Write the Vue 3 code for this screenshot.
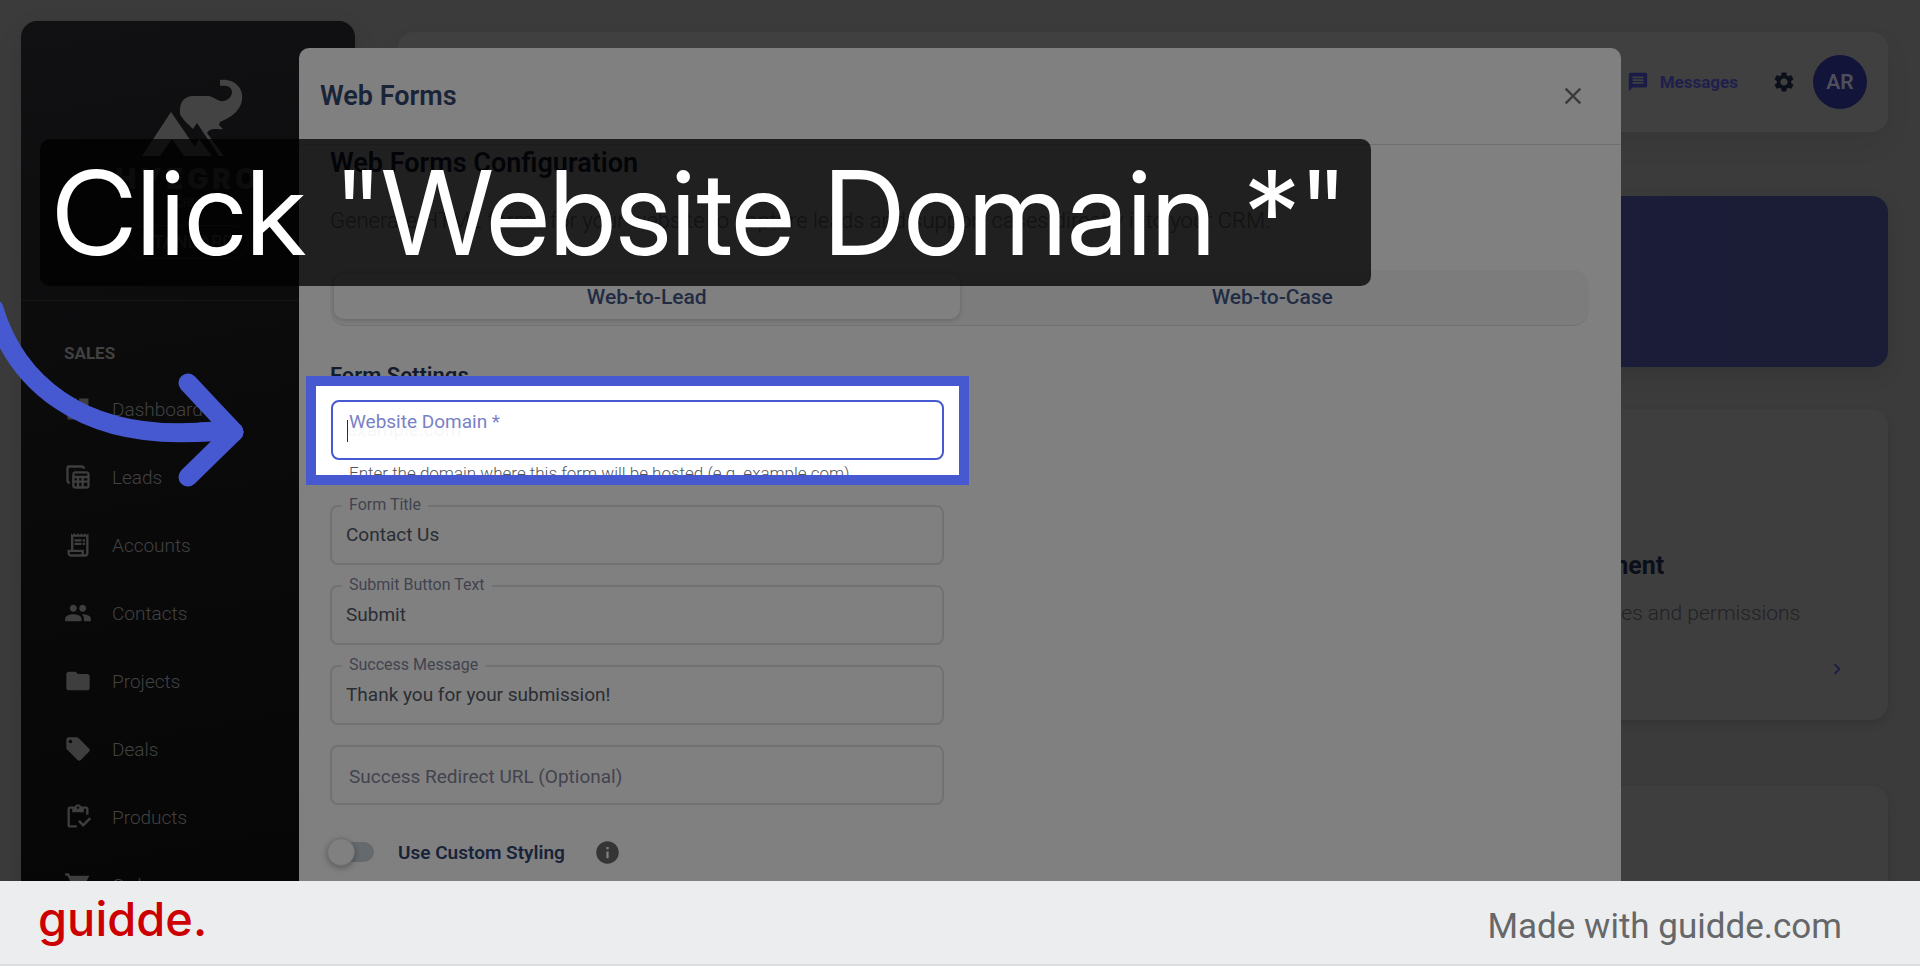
<script setup>
import { ref } from 'vue';

const navItems = [
  { label: 'Dashboard', icon: 'M3 13h8V3H3v10zm0 8h8v-6H3v6zm10 0h8V11h-8v10zm0-18v6h8V3h-8z' },
  { label: 'Leads', icon: 'M9 7h10a3 3 0 0 1 3 3v9a3 3 0 0 1-3 3H10a3 3 0 0 1-3-3V10a3 3 0 0 1 2-3zm0 2v2h11V9zm0 4v2h2v-2zm4 0v2h2v-2zm4 0v2h3v-2zm-8 4v3h2v-3zm4 0v3h2v-3zm4 0v3h3v-3zM4 2h11a3 3 0 0 1 3 3h-2a1 1 0 0 0-1-1H5a1 1 0 0 0-1 1v10a1 1 0 0 0 1 1v2a3 3 0 0 1-3-3V4a2 2 0 0 1 2-2z' },
  { label: 'Accounts', icon: 'M19.5 3.5 18 2l-1.500 1.500L15 2l-1.500 1.500L12 2l-1.500 1.500L9 2 7.500 3.500 6 2v14H3v3c0 1.660 1.340 3 3 3h12c1.660 0 3-1.340 3-3V2l-1.500 1.500zM15 20H6c-.55 0-1-.45-1-1v-1h10v2zm4-1c0 .55-.45 1-1 1s-1-.45-1-1v-3H8V5h11v14zM9 7h6v2H9zm7 0h2v2h-2zm-7 3h6v2H9zm7 0h2v2h-2z' },
  { label: 'Contacts', icon: 'M16 11c1.660 0 2.990-1.340 2.990-3S17.660 5 16 5s-3 1.340-3 3 1.340 3 3 3zm-8 0c1.660 0 2.990-1.340 2.990-3S9.660 5 8 5 5 6.340 5 8s1.340 3 3 3zm0 2c-2.330 0-7 1.170-7 3.500V19h14v-2.500C15 14.170 10.330 13 8 13zm8 0c-.29 0-.62.02-.97.05 1.160.84 1.970 1.970 1.970 3.450V19h6v-2.500c0-2.330-4.670-3.500-7-3.500z' },
  { label: 'Projects', icon: 'M10 4H4c-1.100 0-1.990.9-1.990 2L2 18c0 1.100.9 2 2 2h16c1.100 0 2-.9 2-2V8c0-1.100-.9-2-2-2h-8l-2-2z' },
  { label: 'Deals', icon: 'M21.410 11.580l-9-9C12.050 2.220 11.550 2 11 2H4c-1.100 0-2 .9-2 2v7c0 .55.22 1.050.59 1.420l9 9c.36.36.86.58 1.410.58s1.050-.22 1.410-.59l7-7c.37-.36.59-.86.59-1.410s-.23-1.060-.59-1.420zM5.500 7C4.670 7 4 6.330 4 5.500S4.670 4 5.500 4 7 4.670 7 5.500 6.330 7 5.500 7z' },
  { label: 'Products', icon: 'M5 5h2v3h10V5h2v5h2V5c0-1.100-.9-2-2-2h-4.180C14.400 1.840 13.300 1 12 1s-2.400.84-2.820 2H5c-1.100 0-2 .9-2 2v14c0 1.100.9 2 2 2h6v-2H5V5zm7-2c.55 0 1 .45 1 1s-.45 1-1 1-1-.45-1-1 .45-1 1-1zm9.750 9.250-5.260 5.250-2.990-2.990L12 16.010 16.490 20.500 23.250 13.750z' },
  { label: 'Orders', icon: 'M7 18c-1.100 0-1.990.9-1.990 2S5.900 22 7 22s2-.9 2-2-.9-2-2-2zM1 2v2h2l3.600 7.590-1.350 2.450C4.520 15.370 5.480 17 7 17h12v-2H7.420l1.130-2h7.450c.75 0 1.410-.41 1.750-1.030L21.700 4H5.210l-.94-2H1zm16 16c-1.100 0-1.990.9-1.990 2s.89 2 1.990 2 2-.9 2-2-.9-2-2-2z' }
];

const domain = ref('');
const redirectUrl = ref('');
const customStyling = ref(false);
const activeTab = ref('Web-to-Lead');

const fields = ref([
  { id: 'formTitle', label: 'Form Title', value: 'Contact Us' },
  { id: 'submitText', label: 'Submit Button Text', value: 'Submit' },
  { id: 'successMessage', label: 'Success Message', value: 'Thank you for your submission!' }
]);
</script>

<template>
  <div class="page">
    <div class="stage">
      <aside class="sidebar">
        <div class="brand">
          <svg class="brand-mark" viewBox="0 0 82 78">
            <path d="M0 77 29 33 53 68 57 60 70 77H42L30 60 18 77z" />
            <path d="M38 35C37 24 41 18 50 17H67C72 18 77 23 81 22C93 20 94 4 78 7V1C92-1 102 9 100 21C98 32 90 38 78 43L77 46 81 50C75 51 69 48 65 54L82 77H77L55 44 51 50C45 44 40 40 38 35z" />
          </svg>
          <strong class="brand-name">HYEGRO</strong>
          <small class="brand-sub">CRM</small>
          <span class="plan">STANDARD</span>
        </div>
        <nav class="nav">
          <h2>SALES</h2>
          <a v-for="item in navItems" :key="item.label" href="#" class="nav-item">
            <svg viewBox="0 0 24 24"><path :d="item.icon" fill-rule="evenodd" /></svg>
            {{ item.label }}
          </a>
        </nav>
      </aside>

      <main class="content">
        <header class="topbar">
          <a href="#" class="messages">
            <svg viewBox="0 0 24 24"><path d="M20 2H4c-1.100 0-1.990.9-1.990 2L2 22l4-4h14c1.100 0 2-.9 2-2V4c0-1.100-.9-2-2-2zM6 9h12v2H6V9zm12 5H6v-2h12v2zm0-6H6V6h12v2z" /></svg>
            Messages
          </a>
          <button class="gear" aria-label="Settings">
            <svg viewBox="0 0 24 24"><path d="M19.140 12.940c.04-.3.06-.61.06-.94 0-.32-.02-.64-.07-.94l2.030-1.580c.18-.14.23-.41.12-.61l-1.920-3.320c-.12-.22-.37-.29-.59-.22l-2.390.96c-.5-.38-1.030-.7-1.620-.94l-.36-2.540c-.04-.24-.24-.41-.48-.41h-3.840c-.24 0-.43.17-.47.41l-.36 2.540c-.59.24-1.130.57-1.620.94l-2.390-.96c-.22-.08-.47 0-.59.22L2.740 8.870c-.12.21-.08.47.12.61l2.030 1.580c-.05.3-.09.63-.09.94s.02.64.07.94l-2.030 1.580c-.18.14-.23.41-.12.61l1.920 3.320c.12.22.37.29.59.22l2.390-.96c.5.38 1.030.7 1.620.94l.36 2.540c.05.24.24.41.48.41h3.840c.24 0 .44-.17.47-.41l.36-2.540c.59-.24 1.130-.56 1.620-.94l2.390.96c.22.08.47 0 .59-.22l1.920-3.320c.12-.22.07-.47-.12-.61l-2.010-1.580zM12 15.600c-1.980 0-3.600-1.620-3.600-3.600s1.620-3.600 3.600-3.600 3.600 1.620 3.600 3.600-1.620 3.600-3.600 3.600z" /></svg>
          </button>
          <button class="avatar">AR</button>
        </header>
        <section class="banner"></section>
        <section class="cards">
          <article class="card">
            <h3>User Management</h3>
            <p>Manage users, roles and permissions</p>
            <svg class="chevron" viewBox="0 0 24 24"><path d="M10 6 8.590 7.410 13.170 12l-4.580 4.590L10 18l6-6z" /></svg>
          </article>
          <article class="card"></article>
        </section>
      </main>

      <div class="modal-layer">
        <section class="modal">
          <header class="modal-header">
            <h1>Web Forms</h1>
            <button class="close-btn" aria-label="Close">
              <svg viewBox="0 0 24 24"><path d="M19 6.410 17.590 5 12 10.590 6.410 5 5 6.410 10.590 12 5 17.590 6.410 19 12 13.410 17.590 19 19 17.590 13.410 12z" /></svg>
            </button>
          </header>
          <div class="modal-body">
            <h2 class="config-title">Web Forms Configuration</h2>
            <p class="config-text">Generate HTML forms for your website to capture leads and support cases directly into your CRM.</p>

            <div class="tabs">
              <button
                v-for="tab in ['Web-to-Lead', 'Web-to-Case']"
                :key="tab"
                class="tab"
                :class="{ active: activeTab === tab }"
                @click="activeTab = tab"
              >{{ tab }}</button>
            </div>

            <h3 class="settings-title">Form Settings</h3>

            <!-- highlighted step target -->
            <div class="spotlight">
              <div class="domain-field">
                <input id="domain" v-model="domain" type="text" placeholder="example.com">
                <label for="domain">Website Domain *</label>
                <span class="caret"></span>
              </div>
              <p class="helper">Enter the domain where this form will be hosted (e.g. example.com)</p>
            </div>

            <div class="fields">
              <div v-for="field in fields" :key="field.id" class="field">
                <label :for="field.id">{{ field.label }}</label>
                <input :id="field.id" v-model="field.value" type="text">
              </div>
              <div class="field field-empty">
                <label for="redirectUrl">Success Redirect URL (Optional)</label>
                <input id="redirectUrl" v-model="redirectUrl" type="text">
              </div>
            </div>

            <div class="toggle-container">
              <input id="customStyling" v-model="customStyling" type="checkbox" class="toggle">
              <label for="customStyling">Use Custom Styling</label>
              <svg class="info" viewBox="0 0 24 24"><path d="M12 2C6.480 2 2 6.480 2 12s4.480 10 10 10 10-4.480 10-10S17.520 2 12 2zm1 15h-2v-6h2v6zm0-8h-2V7h2v2z" /></svg>
            </div>
          </div>
        </section>
      </div>

      <svg class="arrow" viewBox="0 0 250 200">
        <path d="M-6 19C14 85 75 155 215 141M188 93 234 142 188 187" />
        <path d="M200 142H234" />
      </svg>
      <div class="callout">Click "Website Domain *"</div>
    </div>

    <footer class="footer">
      <span class="guidde">guidde.</span>
      <a href="#" class="made-with">Made with guidde.com</a>
    </footer>
  </div>
</template>

<style>
body {
  margin: 0;
}
</style>

<style scoped>
* {
  box-sizing: border-box;
}

h1, h2, h3, p {
  margin: 0;
}

button {
  padding: 0;
  border: none;
  background: none;
  font-family: inherit;
  cursor: pointer;
}

a {
  text-decoration: none;
}

.page {
  display: flex;
  flex-direction: column;
  height: 100vh;
  font-family: Roboto, sans-serif;
}

.stage {
  display: flex;
  flex: 1;
  min-height: 0;
  position: relative;
  overflow: hidden;
  background: #3b3b3b;
}

/* sidebar */
.sidebar {
  flex: none;
  width: 334px;
  height: 1200px;
  margin: 21px 0 0 21px;
  border-radius: 16px;
  background: linear-gradient(170deg, #111113 0, #0a0a0b 440px, #060606 900px);
  box-shadow: 0 8px 24px rgba(0, 0, 0, 0.1);
}

.brand {
  display: flex;
  flex-direction: column;
  align-items: center;
  height: 280px;
  padding-top: 58px;
  border-bottom: 1px solid #171717;
}

.brand-mark {
  width: 82px;
  height: 78px;
  margin-right: 10px;
  overflow: visible;
  fill: #434343;
}

.brand-name {
  margin-top: 8px;
  font: 900 28px/28px Inter, sans-serif;
  letter-spacing: 4px;
  color: #303030;
}

.brand-sub {
  font-size: 12px;
  line-height: 20px;
  color: #303030;
}

.plan {
  margin-top: 12px;
  padding: 0 14px;
  border: 1px solid #222;
  border-radius: 16px;
  font-size: 18px;
  font-weight: 500;
  line-height: 32px;
  color: #303030;
}

.nav {
  padding: 42px 43px 0;
}

.nav h2 {
  margin-bottom: 12px;
  font-size: 17px;
  font-weight: 700;
  line-height: 20px;
  color: #414141;
}

.nav-item {
  display: flex;
  align-items: center;
  gap: 20px;
  height: 68px;
  font-size: 19px;
  font-weight: 300;
  color: #424242;
}

.nav-item svg {
  width: 28px;
  height: 28px;
  fill: #3e3e3e;
}

/* page behind the dialog */
.content {
  flex: 1;
  padding: 32px 32px 0 43px;
}

.topbar {
  display: flex;
  justify-content: flex-end;
  align-items: center;
  height: 100px;
  padding: 0 21px;
  border-radius: 16px;
  background: #404040;
  box-shadow: 0 12px 28px rgba(0, 0, 0, 0.06);
}

.messages {
  display: flex;
  align-items: center;
  gap: 11px;
  font-size: 17px;
  font-weight: 700;
  color: #1e1f4c;
}

.messages svg {
  width: 22px;
  height: 22px;
  fill: #1a1b46;
}

.gear {
  margin: 0 17px 0 34px;
}

.gear svg {
  display: block;
  width: 24px;
  height: 24px;
  fill: #0b0f19;
}

.avatar {
  width: 54px;
  height: 54px;
  border-radius: 50%;
  background: #131439;
  font-size: 21px;
  font-weight: 600;
  color: #4f4f5c;
}

.banner {
  height: 171px;
  margin-top: 64px;
  border-radius: 16px;
  background: linear-gradient(90deg, #1b1e45, #1b1d36);
  box-shadow: 0 8px 20px rgba(0, 0, 0, 0.1);
}

.cards {
  display: flex;
  flex-direction: column;
  align-items: flex-end;
  gap: 66px;
  margin-top: 42px;
}

.card {
  flex: none;
  width: 480px;
  height: 311px;
  padding: 143px 40px 0 50px;
  border-radius: 16px;
  background: #3e3e3e;
  box-shadow: 0 4px 8px rgba(0, 0, 0, 0.12);
}

.card h3 {
  font-size: 25px;
  font-weight: 700;
  line-height: 28px;
  color: #0b0f19;
}

.card p {
  margin-top: 19px;
  font-size: 21px;
  font-weight: 300;
  line-height: 28px;
  white-space: nowrap;
  color: #222225;
}

.chevron {
  display: block;
  width: 22px;
  height: 22px;
  margin: 31px 0 0 auto;
  fill: #1b1b46;
}

/* dialog */
.modal-layer {
  display: flex;
  justify-content: center;
  align-items: flex-start;
  position: absolute;
  inset: 0;
  padding: 48px 24px 0;
}

.modal {
  width: 100%;
  max-width: 1322px;
  min-height: 1000px;
  border-radius: 10px;
  background: #808080;
}

.modal-header {
  display: flex;
  justify-content: space-between;
  align-items: center;
  height: 97px;
  padding: 0 34px 0 21px;
  border-bottom: 1px solid #707070;
}

.modal-header h1 {
  font-size: 27px;
  font-weight: 600;
  line-height: 32px;
  color: #1a2438;
}

.close-btn svg {
  display: block;
  width: 28px;
  height: 28px;
  fill: #3a3a3a;
}

.modal-body {
  padding: 2px 32px 0 31px;
}

.config-title {
  font-size: 27px;
  font-weight: 600;
  line-height: 32px;
  color: #0d1220;
}

.config-text {
  margin-top: 28px;
  font-size: 22px;
  font-weight: 300;
  line-height: 28px;
  color: #45454b;
}

.tabs {
  display: flex;
  height: 56px;
  margin-top: 35px;
  padding: 4px 4px 6px;
  border-bottom: 1px solid #727272;
  border-radius: 16px;
  background: #7c7c7c;
}

.tab {
  flex: 1;
  border-radius: 10px;
  font-size: 21px;
  font-weight: 500;
  color: #212c44;
}

.tab.active {
  background: #808080;
  box-shadow: 0 1px 5px rgba(0, 0, 0, 0.2);
}

.settings-title {
  margin-top: 36px;
  font-size: 22px;
  font-weight: 600;
  line-height: 28px;
  color: #131b2c;
}

.spotlight {
  position: relative;
  width: calc(50% + 33px);
  height: 109px;
  margin: -14px 0 0 -24px;
  padding: 14px 15px 0;
  border: 10px solid #4759d1;
  background: #fff;
  overflow: hidden;
}

.domain-field {
  position: relative;
}

input[type='text'] {
  display: block;
  width: 100%;
  height: 60px;
  padding: 0 14px 2px;
  border: 2px solid #727272;
  border-radius: 8px;
  outline: none;
  background: transparent;
  font-family: inherit;
  font-size: 19px;
  color: #2a2d33;
}

.domain-field input[type='text'] {
  border-color: #4759d1;
}

.domain-field input::placeholder {
  color: #f7f7f9;
  opacity: 1;
}

.domain-field label {
  position: absolute;
  top: 10px;
  left: 18px;
  font-size: 19px;
  line-height: 24px;
  color: #7981c6;
}

.caret {
  position: absolute;
  top: 20px;
  left: 16px;
  width: 1px;
  height: 22px;
  background: #2a2d33;
}

.helper {
  margin: 3px 0 0 18px;
  font-size: 17px;
  font-weight: 300;
  line-height: 20px;
  white-space: nowrap;
  color: #55565a;
}

.fields {
  display: grid;
  gap: 10px;
  width: calc(50% - 16px);
  margin-top: 10px;
}

.field label {
  display: block;
  position: relative;
  width: fit-content;
  margin: 0 0 -10px 12px;
  padding: 0 7px;
  background: #808080;
  font-size: 16px;
  line-height: 20px;
  color: #42434f;
}

.field-empty {
  padding-top: 10px;
}

.field-empty label {
  margin-bottom: -64px;
  background: none;
  font-size: 19px;
  line-height: 64px;
}

.toggle-container {
  display: flex;
  align-items: center;
  height: 28px;
  margin-top: 33px;
}

.toggle {
  display: flex;
  align-items: center;
  appearance: none;
  width: 44px;
  height: 20px;
  margin: 0;
  border-radius: 10px;
  background: #656a6e;
  cursor: pointer;
}

.toggle::before {
  content: '';
  width: 26px;
  height: 26px;
  margin-left: -3px;
  border: 1px solid #707070;
  border-radius: 50%;
  background: #808080;
  box-shadow: 0 2px 6px rgba(0, 0, 0, 0.3);
}

.toggle:checked {
  justify-content: flex-end;
}

.toggle-container label {
  margin-left: 24px;
  font-size: 19px;
  font-weight: 600;
  color: #18233a;
}

.info {
  width: 27px;
  height: 27px;
  margin-left: 29px;
  fill: #353535;
}

/* step overlay */
.arrow {
  position: absolute;
  top: 290px;
  left: 0;
  width: 250px;
  height: 200px;
  fill: none;
  stroke: #4759d1;
  stroke-width: 19;
  stroke-linecap: round;
  stroke-linejoin: round;
}

.callout {
  position: absolute;
  top: 139px;
  left: 40px;
  padding: 0 24px 0 12px;
  border-radius: 10px;
  background: rgba(0, 0, 0, 0.75);
  font: 400 117px/147px "Inter Display", Inter, sans-serif;
  white-space: nowrap;
  color: #fff;
}

.footer {
  display: flex;
  flex: none;
  justify-content: space-between;
  align-items: center;
  height: 85px;
  padding: 0 78px 0 38px;
  border-bottom: 2px solid #dcdee0;
  background: #ecedef;
}

.guidde {
  padding-bottom: 8px;
  font: 500 47px/56px Inter, sans-serif;
  color: #c00;
}

.made-with {
  padding-top: 8px;
  font-size: 35px;
  line-height: 44px;
  color: #666769;
}
</style>
